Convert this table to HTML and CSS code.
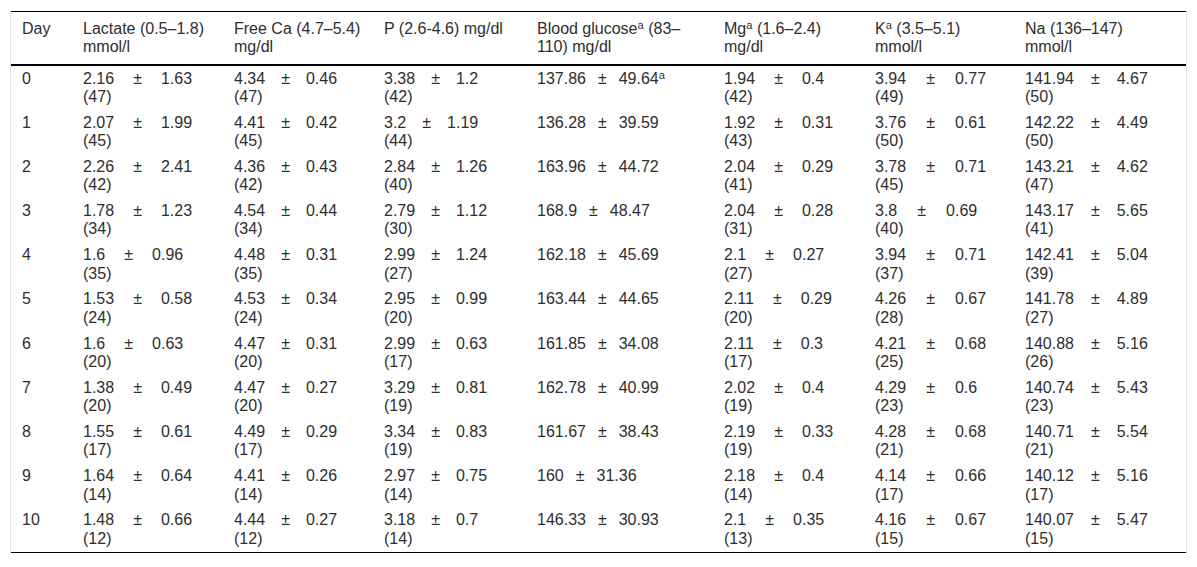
FILE: index.html
```html
<!DOCTYPE html>
<html lang="en">
<head>
<meta charset="utf-8">
<title>Laboratory values by day</title>
<link rel="stylesheet" href="styles.css">
</head>
<body>
<div class="wrap">
<table class="lab">
  <colgroup>
    <col class="c-day"><col class="c-lac"><col class="c-ca"><col class="c-p"><col class="c-glu"><col class="c-mg"><col class="c-k"><col class="c-na">
  </colgroup>
  <thead>
    <tr>
      <th>Day</th>
      <th>Lactate (0.5–1.8) <span class="u">mmol/l</span></th>
      <th>Free Ca (4.7–5.4) <span class="u">mg/dl</span></th>
      <th>P (2.6-4.6) mg/dl</th>
      <th>Blood glucose<sup>a</sup> (83–110) mg/dl</th>
      <th>Mg<sup>a</sup> (1.6–2.4) <span class="u">mg/dl</span></th>
      <th>K<sup>a</sup> (3.5–5.1) <span class="u">mmol/l</span></th>
      <th>Na (136–147) <span class="u">mmol/l</span></th>
    </tr>
  </thead>
  <tbody>
    <tr><td>0</td><td>2.16<span class="pm">±</span>1.63<span class="n">(47)</span></td><td>4.34<span class="pm">±</span>0.46<span class="n">(47)</span></td><td>3.38<span class="pm">±</span>1.2<span class="n">(42)</span></td><td>137.86<span class="pm">±</span>49.64<sup>a</sup></td><td>1.94<span class="pm">±</span>0.4<span class="n">(42)</span></td><td>3.94<span class="pm">±</span>0.77<span class="n">(49)</span></td><td>141.94<span class="pm">±</span>4.67<span class="n">(50)</span></td></tr>
    <tr><td>1</td><td>2.07<span class="pm">±</span>1.99<span class="n">(45)</span></td><td>4.41<span class="pm">±</span>0.42<span class="n">(45)</span></td><td>3.2<span class="pm">±</span>1.19<span class="n">(44)</span></td><td>136.28<span class="pm">±</span>39.59</td><td>1.92<span class="pm">±</span>0.31<span class="n">(43)</span></td><td>3.76<span class="pm">±</span>0.61<span class="n">(50)</span></td><td>142.22<span class="pm">±</span>4.49<span class="n">(50)</span></td></tr>
    <tr><td>2</td><td>2.26<span class="pm">±</span>2.41<span class="n">(42)</span></td><td>4.36<span class="pm">±</span>0.43<span class="n">(42)</span></td><td>2.84<span class="pm">±</span>1.26<span class="n">(40)</span></td><td>163.96<span class="pm">±</span>44.72</td><td>2.04<span class="pm">±</span>0.29<span class="n">(41)</span></td><td>3.78<span class="pm">±</span>0.71<span class="n">(45)</span></td><td>143.21<span class="pm">±</span>4.62<span class="n">(47)</span></td></tr>
    <tr><td>3</td><td>1.78<span class="pm">±</span>1.23<span class="n">(34)</span></td><td>4.54<span class="pm">±</span>0.44<span class="n">(34)</span></td><td>2.79<span class="pm">±</span>1.12<span class="n">(30)</span></td><td>168.9<span class="pm">±</span>48.47</td><td>2.04<span class="pm">±</span>0.28<span class="n">(31)</span></td><td>3.8<span class="pm">±</span>0.69<span class="n">(40)</span></td><td>143.17<span class="pm">±</span>5.65<span class="n">(41)</span></td></tr>
    <tr><td>4</td><td>1.6<span class="pm">±</span>0.96<span class="n">(35)</span></td><td>4.48<span class="pm">±</span>0.31<span class="n">(35)</span></td><td>2.99<span class="pm">±</span>1.24<span class="n">(27)</span></td><td>162.18<span class="pm">±</span>45.69</td><td>2.1<span class="pm">±</span>0.27<span class="n">(27)</span></td><td>3.94<span class="pm">±</span>0.71<span class="n">(37)</span></td><td>142.41<span class="pm">±</span>5.04<span class="n">(39)</span></td></tr>
    <tr><td>5</td><td>1.53<span class="pm">±</span>0.58<span class="n">(24)</span></td><td>4.53<span class="pm">±</span>0.34<span class="n">(24)</span></td><td>2.95<span class="pm">±</span>0.99<span class="n">(20)</span></td><td>163.44<span class="pm">±</span>44.65</td><td>2.11<span class="pm">±</span>0.29<span class="n">(20)</span></td><td>4.26<span class="pm">±</span>0.67<span class="n">(28)</span></td><td>141.78<span class="pm">±</span>4.89<span class="n">(27)</span></td></tr>
    <tr><td>6</td><td>1.6<span class="pm">±</span>0.63<span class="n">(20)</span></td><td>4.47<span class="pm">±</span>0.31<span class="n">(20)</span></td><td>2.99<span class="pm">±</span>0.63<span class="n">(17)</span></td><td>161.85<span class="pm">±</span>34.08</td><td>2.11<span class="pm">±</span>0.3<span class="n">(17)</span></td><td>4.21<span class="pm">±</span>0.68<span class="n">(25)</span></td><td>140.88<span class="pm">±</span>5.16<span class="n">(26)</span></td></tr>
    <tr><td>7</td><td>1.38<span class="pm">±</span>0.49<span class="n">(20)</span></td><td>4.47<span class="pm">±</span>0.27<span class="n">(20)</span></td><td>3.29<span class="pm">±</span>0.81<span class="n">(19)</span></td><td>162.78<span class="pm">±</span>40.99</td><td>2.02<span class="pm">±</span>0.4<span class="n">(19)</span></td><td>4.29<span class="pm">±</span>0.6<span class="n">(23)</span></td><td>140.74<span class="pm">±</span>5.43<span class="n">(23)</span></td></tr>
    <tr><td>8</td><td>1.55<span class="pm">±</span>0.61<span class="n">(17)</span></td><td>4.49<span class="pm">±</span>0.29<span class="n">(17)</span></td><td>3.34<span class="pm">±</span>0.83<span class="n">(19)</span></td><td>161.67<span class="pm">±</span>38.43</td><td>2.19<span class="pm">±</span>0.33<span class="n">(19)</span></td><td>4.28<span class="pm">±</span>0.68<span class="n">(21)</span></td><td>140.71<span class="pm">±</span>5.54<span class="n">(21)</span></td></tr>
    <tr><td>9</td><td>1.64<span class="pm">±</span>0.64<span class="n">(14)</span></td><td>4.41<span class="pm">±</span>0.26<span class="n">(14)</span></td><td>2.97<span class="pm">±</span>0.75<span class="n">(14)</span></td><td>160<span class="pm">±</span>31.36</td><td>2.18<span class="pm">±</span>0.4<span class="n">(14)</span></td><td>4.14<span class="pm">±</span>0.66<span class="n">(17)</span></td><td>140.12<span class="pm">±</span>5.16<span class="n">(17)</span></td></tr>
    <tr><td>10</td><td>1.48<span class="pm">±</span>0.66<span class="n">(12)</span></td><td>4.44<span class="pm">±</span>0.27<span class="n">(12)</span></td><td>3.18<span class="pm">±</span>0.7<span class="n">(14)</span></td><td>146.33<span class="pm">±</span>30.93</td><td>2.1<span class="pm">±</span>0.35<span class="n">(13)</span></td><td>4.16<span class="pm">±</span>0.67<span class="n">(15)</span></td><td>140.07<span class="pm">±</span>5.47<span class="n">(15)</span></td></tr>
  </tbody>
</table>
</div>
</body>
</html>
```
FILE: styles.css
```css
html, body {
  margin: 0;
  padding: 0;
  background: #ffffff;
}

body {
  font-family: "Liberation Sans", Arial, sans-serif;
  font-size: 16px;
  color: #2e2e2e;
}

.wrap {
  margin: 11px 0 0 10px;
  width: 1175px;
  border-left: 1px solid #e4e4e4;
  border-right: 1px solid #e4e4e4;
}

.lab {
  width: 1175px;
  table-layout: fixed;
  border-collapse: collapse;
  border-top: 1px solid #000000;
  border-bottom: 1px solid #000000;
}

.c-day { width: 61px; }
.c-lac { width: 151px; }
.c-ca  { width: 150px; }
.c-p   { width: 153px; }
.c-glu { width: 187px; }
.c-mg  { width: 151px; }
.c-k   { width: 150px; }
.c-na  { width: 172px; }

.lab th,
.lab td {
  text-align: left;
  vertical-align: top;
  line-height: 18.4px;
  padding: 3.7px 12px 3.7px 11px;
}

.lab th {
  font-weight: normal;
  padding-top: 8px;
  padding-bottom: 7px;
}

.lab thead tr {
  border-bottom: 2px solid #000000;
}

.u,
.n {
  display: block;
}

.pm {
  padding: 0 17px;
}

.lab td:nth-child(2) .pm { padding: 0 19px; }
.lab td:nth-child(3) .pm { padding: 0 16px; }
.lab td:nth-child(4) .pm { padding: 0 16px; }
.lab td:nth-child(5) .pm { padding: 0 12px; }
.lab td:nth-child(6) .pm { padding: 0 19px; }
.lab td:nth-child(7) .pm { padding: 0 20px; }
.lab td:nth-child(8) .pm { padding: 0 17px; }

sup {
  font-size: 0.7em;
  line-height: 0;
  vertical-align: 0.45em;
}
```
